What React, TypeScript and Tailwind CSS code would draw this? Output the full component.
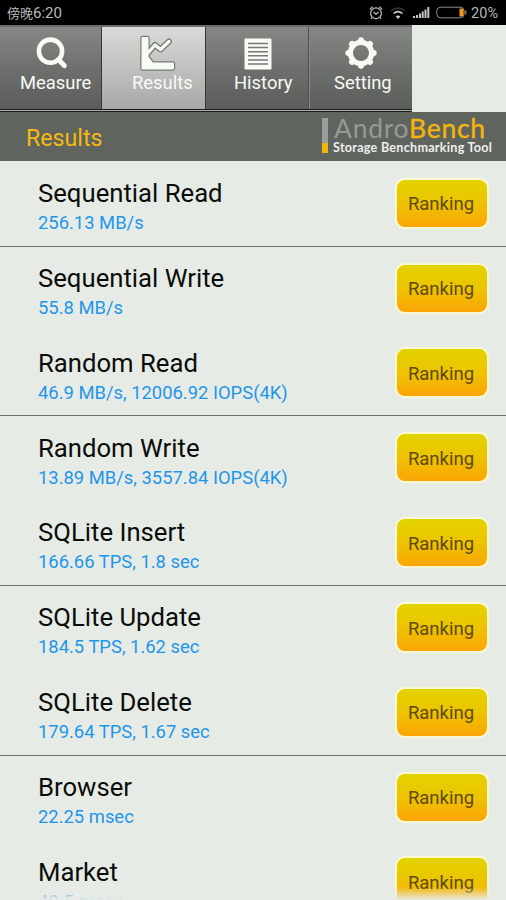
import type { ReactNode } from "react";
import clsx from "clsx";

interface IResult {
  name: string;
  value: string;
  divider?: boolean;
}

interface ITab {
  label: string;
  icon: ReactNode;
  active?: boolean;
  className: string;
  labelClassName: string;
  iconClassName: string;
}

const results: IResult[] = [
  { name: "Sequential Read", value: "256.13 MB/s", divider: true },
  { name: "Sequential Write", value: "55.8 MB/s" },
  { name: "Random Read", value: "46.9 MB/s, 12006.92 IOPS(4K)", divider: true },
  { name: "Random Write", value: "13.89 MB/s, 3557.84 IOPS(4K)" },
  { name: "SQLite Insert", value: "166.66 TPS, 1.8 sec", divider: true },
  { name: "SQLite Update", value: "184.5 TPS, 1.62 sec" },
  { name: "SQLite Delete", value: "179.64 TPS, 1.67 sec", divider: true },
  { name: "Browser", value: "22.25 msec" },
  { name: "Market", value: "48.5 msec" },
];

function MeasureIcon() {
  return (
    <svg width="34" height="34" viewBox="0 0 34 34" fill="none" stroke="#f8faf6">
      <circle cx="16.5" cy="14.2" r="11.6" strokeWidth="4.6" />
      <path d="M24.5 22.5 30.3 28.6" strokeWidth="5" strokeLinecap="round" />
    </svg>
  );
}

function ResultsIcon() {
  return (
    <svg
      width="40"
      height="38"
      viewBox="0 0 40 38"
      fill="none"
      strokeLinecap="round"
      strokeLinejoin="round"
    >
      <g stroke="#777b77">
        <path d="M4.500 3H9.500V22L14.500 28.500H35V33.500H4.500Z" strokeWidth="4.400" />
        <path d="M9.500 18.500 17 10 22.500 14.500 31 6.500" strokeWidth="6" />
      </g>
      <g stroke="#f8faf6">
        <path
          d="M4.500 3H9.500V22L14.500 28.500H35V33.500H4.500Z"
          strokeWidth="2"
          fill="#f8faf6"
        />
        <path d="M9.500 18.500 17 10 22.500 14.500 31 6.500" strokeWidth="3.300" />
      </g>
    </svg>
  );
}

function HistoryIcon() {
  return (
    <svg width="28" height="32" viewBox="0 0 28 32">
      <rect x="0.5" y="0.5" width="27" height="31" rx="1" fill="#f8faf6" />
      <path
        d="M4 5.500h20M4 9.600h20M4 13.700h20M4 17.800h20M4 21.900h20M4 26h20"
        stroke="#747774"
        strokeWidth="1.500"
      />
    </svg>
  );
}

function SettingIcon() {
  const teeth = [0, 45, 90, 135, 180, 225, 270, 315];
  return (
    <svg width="32" height="32" viewBox="0 0 32 32" fill="#f8faf6">
      <circle cx="16" cy="16" r="10.6" fill="none" stroke="#f8faf6" strokeWidth="5.200" />
      {teeth.map((angle) => (
        <circle
          key={angle}
          cx="16"
          cy="3.300"
          r="3"
          transform={`rotate(${angle} 16 16)`}
        />
      ))}
    </svg>
  );
}

const tabs: ITab[] = [
  {
    label: "Measure",
    icon: <MeasureIcon />,
    className: "w-[102px] border-r border-[#343634]",
    labelClassName: "pl-[20px]",
    iconClassName: "pl-[34px] pt-[10px]",
  },
  {
    label: "Results",
    icon: <ResultsIcon />,
    active: true,
    className: "w-[104px] border-r border-[#343634]",
    labelClassName: "pl-[30px]",
    iconClassName: "pl-[36px] pt-[8px]",
  },
  {
    label: "History",
    icon: <HistoryIcon />,
    className: "w-[103px] border-r border-[#4a4c4a]",
    labelClassName: "pl-[28px]",
    iconClassName: "pl-[38px] pt-[11px]",
  },
  {
    label: "Setting",
    icon: <SettingIcon />,
    className: "w-[103px] border-l border-[#8a8d8a]",
    labelClassName: "pl-[24px]",
    iconClassName: "pl-[35px] pt-[10px]",
  },
];

function StatusBar() {
  return (
    <div className="flex h-[25px] shrink-0 items-center justify-between bg-black pl-[7px] pr-[8px] text-[#b9b9b9]">
      <div className="flex items-baseline pt-[2px] leading-none">
        <span className="text-[13px]">傍晚</span>
        <span className="text-[15px]">6:20</span>
      </div>
      <div className="flex items-center">
        <svg width="16" height="16" viewBox="0 0 16 16" fill="none" stroke="#bdbdbd">
          <circle cx="8" cy="8.3" r="5.4" strokeWidth="1.2" />
          <path
            d="M5.6 7 8 9.2 10.6 7M1.8 4.4 4.6 1.8M11.4 1.8 14.2 4.4M4 12.5 2.8 14M12 12.5 13.2 14"
            strokeWidth="1.2"
          />
        </svg>
        <svg className="ml-[6px]" width="16" height="14" viewBox="0 0 16 14" fill="none">
          <path d="M1 5Q8-.8 15 5" stroke="#303030" strokeWidth="1.5" />
          <path d="M3.5 7.5Q8 3.6 12.5 7.5" stroke="#c8c8c8" strokeWidth="1.6" />
          <path d="M5.8 10.500Q8 8.500 10.2 10.500L8 12.900Z" fill="#d8d8d8" />
        </svg>
        <svg className="ml-[7px]" width="17" height="12" viewBox="0 0 17 12" fill="#c4c4c4">
          <path d="M0 9h2v2H0zM3 8h2v3H3zM6 6.500h2V11H6zM8.700 4.500h2V11h-2zM11.500 2.500h2V11h-2zM14.300 0h2v11h-2z" />
        </svg>
        <svg className="ml-[6px]" width="31" height="13" viewBox="0 0 31 13" fill="none">
          <rect x="0.700" y="1.200" width="27.500" height="10.600" rx="4" stroke="#8e8e8e" />
          <path d="M23.500 2.500h2q2 0 2 2v4q0 2-2 2h-2z" fill="#f59a1c" />
          <path d="M29.800 4.500v4" stroke="#9b7a4c" strokeWidth="1.300" />
        </svg>
        <span className="ml-[4px] pt-[3px] text-[14.500px] leading-none">20%</span>
      </div>
    </div>
  );
}

function TabBar() {
  return (
    <nav className="w-[412px] shrink-0 border-t-2 border-[#6a6d6a]">
      <div className="flex h-[82px]">
        {tabs.map((tab) => (
          <button
            key={tab.label}
            className={clsx(
              "flex flex-col items-start text-left",
              tab.className,
              tab.active
                ? "bg-linear-to-b from-[#d9dbd8] to-[#a6a9a6]"
                : "bg-linear-to-b from-[#858884] via-[#6e706d] to-[#5b5d5b]"
            )}
          >
            <span className={clsx("block h-[45px]", tab.iconClassName)}>
              {tab.icon}
            </span>
            <span
              className={clsx(
                "block text-[18.400px] leading-[21px] text-[#f8faf6]",
                tab.labelClassName
              )}
            >
              {tab.label}
            </span>
          </button>
        ))}
      </div>
      <div className="h-px bg-[#1c1e1c]" />
      <div className="h-px bg-[#a9aca9]" />
      <div className="h-px bg-[#1c1e1c]" />
    </nav>
  );
}

function Logo() {
  return (
    <div className="flex pt-[6px]">
      <div className="flex h-[35px] w-[6px] flex-col">
        <span className="flex-1 bg-[#9b9e9b]" />
        <span className="h-[10px] bg-[#f2b50c]" />
      </div>
      <div className="ml-[5px] flex w-[160px] flex-col">
        <span className="-mt-[3px] pl-px font-['Lato',sans-serif] text-[26.500px] leading-[26px] tracking-[0.750px] whitespace-nowrap text-[#979a97]">
          Andro
          <span className="text-[#f2b50c] [-webkit-text-stroke:0.400px_#f2b50c]">
            Bench
          </span>
        </span>
        <span className="font-['Lato',sans-serif] text-[12.600px] font-bold leading-[13px] tracking-[0.260px] whitespace-nowrap text-[#eef0ec]">
          Storage Benchmarking Tool
        </span>
      </div>
    </div>
  );
}

function ResultRow({ result }: { result: IResult }) {
  return (
    <li
      className={clsx(
        "flex h-[84.850px] shrink-0 items-start justify-between border-b pl-[38px] pr-[17px]",
        result.divider ? "border-[#6b6e6b]" : "border-transparent"
      )}
    >
      <div className="pt-[15.300px]">
        <div className="text-[25.700px] leading-[32px] text-[#0b0d0b]">
          {result.name}
        </div>
        <div className="text-[18.400px] leading-[27px] text-[#1e96ea]">
          {result.value}
        </div>
      </div>
      <button className="mt-[16px] h-[51px] w-[94px] rounded-[10px] border-2 border-[#f9f8d0] bg-linear-to-b from-[#e2d300] via-[#edc300] to-[#fba506] pt-[4px] pr-[2px] text-[18.500px] text-[#5c4a12] shadow-[0_0_1px_#fbf9d8]">
        Ranking
      </button>
    </li>
  );
}

export default function App() {
  return (
    <div className="relative flex h-[900px] w-[506px] flex-col overflow-hidden bg-[#e7ebe6] font-['Roboto','Noto_Sans_CJK_SC',sans-serif]">
      <StatusBar />
      <TabBar />
      <header className="flex h-[49px] shrink-0 items-start justify-between bg-[#60645f] pl-[26px] pr-[13px]">
        <h1 className="pt-[11px] text-[23.200px] leading-[30px] text-[#f5b910]">
          Results
        </h1>
        <Logo />
      </header>
      <ul className="flex flex-col pt-[0.700px]">
        {results.map((result) => (
          <ResultRow key={result.name} result={result} />
        ))}
      </ul>
      {/* fade at the end of the scroll area */}
      <div className="absolute inset-x-0 bottom-0 h-[13px] bg-linear-to-b from-[#e7ebe6]/0 to-[#e7ebe6]" />
    </div>
  );
}
